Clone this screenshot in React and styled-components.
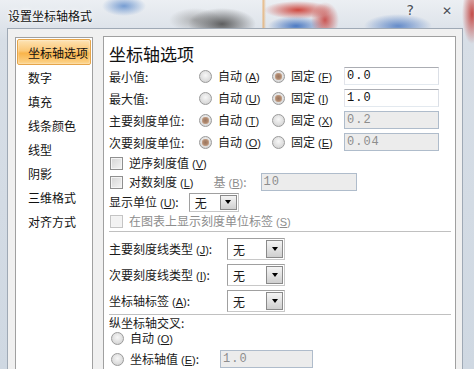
import styled, { createGlobalStyle, css } from "styled-components";

const GlobalStyle = createGlobalStyle`
  html, body {
    margin: 0;
    padding: 0;
    background: #fff;
  }
  body {
    font-family: "Noto Sans CJK SC", "DejaVu Sans", sans-serif;
    font-size: 12px;
    color: #1b1b1b;
  }
`;

// prettier-ignore
const navItems = ["坐标轴选项", "数字", "填充", "线条颜色", "线型", "阴影", "三维格式", "对齐方式"];

// label text with its access key, e.g. 自动(A)
function Label({ text, k, colon }) {
  return (
    <Txt>
      {text}
      <Acc>
        (<u>{k}</u>)
      </Acc>
      {colon && ":"}
    </Txt>
  );
}

function Radio({ checked }) {
  return <RadioDot $checked={checked} />;
}

function Select() {
  return (
    <SelectBox>
      <span>无</span>
      <DropBtn />
    </SelectBox>
  );
}

export default function App() {
  return (
    <>
      <GlobalStyle />
      <Window>
        <TitleBar>
          <Title>设置坐标轴格式</Title>
          <Caption>
            <span>?</span>
            <span className="x">✕</span>
          </Caption>
        </TitleBar>

        <Body>
          <Nav>
            {navItems.map((item, i) => (
              <NavItem key={item} $active={i === 0}>
                {item}
              </NavItem>
            ))}
          </Nav>

          <Panel>
            <Heading>坐标轴选项</Heading>

            <AxisGrid>
              <span>最小值:</span>
              <Choice><Radio /><Label text="自动" k="A" /></Choice>
              <Choice><Radio checked /><Label text="固定" k="F" /></Choice>
              <TextBox $w={95}>0.0</TextBox>

              <span>最大值:</span>
              <Choice><Radio /><Label text="自动" k="U" /></Choice>
              <Choice><Radio checked /><Label text="固定" k="I" /></Choice>
              <TextBox $w={95}>1.0</TextBox>

              <span>主要刻度单位:</span>
              <Choice><Radio checked /><Label text="自动" k="T" /></Choice>
              <Choice><Radio /><Label text="固定" k="X" /></Choice>
              <TextBox $w={95} $disabled>0.2</TextBox>

              <span>次要刻度单位:</span>
              <Choice><Radio checked /><Label text="自动" k="O" /></Choice>
              <Choice><Radio /><Label text="固定" k="E" /></Choice>
              <TextBox $w={95} $disabled>0.04</TextBox>
            </AxisGrid>

            <CheckRow $h={20}>
              <CheckBox />
              <Label text="逆序刻度值" k="V" />
            </CheckRow>
            <CheckRow $h={18}>
              <CheckBox />
              <Label text="对数刻度" k="L" />
              <BaseLabel>
                <Label text="基" k="B" colon />
              </BaseLabel>
              <TextBox $w={96} $disabled>10</TextBox>
            </CheckRow>
            <Row $h={22} $gap={10}>
              <Label text="显示单位" k="U" colon />
              <Select />
            </Row>
            <CheckRow $h={17} $disabled>
              <CheckBox $disabled />
              <Label text="在图表上显示刻度单位标签" k="S" />
            </CheckRow>

            <Separator />

            <TickGrid>
              <Label text="主要刻度线类型" k="J" colon />
              <Select />
              <Label text="次要刻度线类型" k="I" colon />
              <Select />
              <Label text="坐标轴标签" k="A" colon />
              <Select />
            </TickGrid>

            <Separator $top={0} />

            <Row $h={13} $top={1}>纵坐标轴交叉:</Row>
            <Row $h={15} $top={2} $indent={2}>
              <Radio />
              <Label text="自动" k="O" />
            </Row>
            <Row $h={20} $top={3} $indent={2}>
              <Radio />
              <Label text="坐标轴值" k="E" colon />
              <TextBox $w={93} $disabled $ml={15}>1.0</TextBox>
            </Row>
          </Panel>
        </Body>
      </Window>
    </>
  );
}

/********************* styled component *************************/
const Window = styled.div`
  width: 474px;
  height: 369px;
  overflow: hidden;
  display: flex;
  flex-direction: column;
  background:
    radial-gradient(ellipse 22px 10px at 124px 6px, rgba(80, 130, 200, 0.75), transparent),
    radial-gradient(ellipse 34px 16px at 222px 24px, rgba(70, 70, 70, 0.85), transparent),
    radial-gradient(ellipse 26px 12px at 195px 20px, rgba(140, 140, 140, 0.6), transparent),
    radial-gradient(ellipse 34px 9px at 298px 10px, rgba(205, 55, 45, 0.9), transparent),
    radial-gradient(ellipse 14px 18px at 325px 20px, rgba(195, 50, 45, 0.8), transparent),
    radial-gradient(ellipse 28px 10px at 296px 26px, rgba(60, 110, 190, 0.9), transparent),
    radial-gradient(ellipse 34px 12px at 398px 26px, rgba(60, 110, 190, 0.75), transparent),
    radial-gradient(ellipse 10px 30px at 472px 14px, rgba(190, 50, 45, 0.85), transparent),
    linear-gradient(90deg, transparent 262px, rgba(230, 160, 80, 0.7) 263px, transparent 266px),
    linear-gradient(#eceff3, #d7dee6 40px, #cfd8e2);
`;

const TitleBar = styled.div`
  height: 28px;
  flex: none;
  display: flex;
  align-items: center;
  justify-content: space-between;
  padding: 0 22px 0 8px;
`;

const Title = styled.div`
  font-size: 12px;
  color: #111;
  text-shadow: 0 0 6px #fff, 0 0 3px #fff;
  margin-top: 2px;
`;

const Caption = styled.div`
  display: flex;
  gap: 28px;
  align-self: flex-start;
  margin-top: 2px;
  font-family: "DejaVu Sans", sans-serif;
  font-size: 14px;
  color: #4a4f57;
  text-shadow: 0 0 4px #fff;

  .x {
    font-size: 12px;
    margin-top: 2px;
  }
`;

const Body = styled.div`
  flex: 1;
  margin: 0 11px 0 7px;
  background: #f0f0f0;
  border: 1px solid #9fa9b5;
  border-bottom: none;
  display: flex;
  align-items: flex-start;
  padding: 7px 0 0 7px;
  gap: 10px;
`;

const Nav = styled.div`
  width: 76px;
  height: 340px;
  background: #fff;
  border: 1px solid #a0a0a0;
  padding-top: 1px;
  margin-top: 1px;
`;

const NavItem = styled.div`
  height: 24px;
  display: flex;
  align-items: center;
  padding-left: 11px;
  margin: 0 1px;
  white-space: nowrap;
  color: #111;

  ${(props) =>
    props.$active &&
    css`
      background: linear-gradient(#fde3b3, #fbc877 45%, #f9b44a 55%, #fcd48c);
      border: 1px solid #e6a54a;
      border-radius: 2px;
      padding-left: 10px;
      box-shadow: inset 0 0 2px rgba(255, 255, 255, 0.8);
    `}
`;

const Panel = styled.div`
  width: 346px;
  height: 340px;
  background: #fff;
  border: 1px solid #a0a0a0;
  padding: 7px 0 0 5px;
`;

const Heading = styled.div`
  font-size: 17px;
  line-height: 20px;
  color: #111;
  height: 21px;
`;

const AxisGrid = styled.div`
  display: grid;
  grid-template-columns: 90px 73px 72px 95px;
  grid-auto-rows: 22px;
  align-items: center;
  white-space: nowrap;
`;

const Choice = styled.span`
  display: flex;
  align-items: center;
  gap: 6px;
`;

const Txt = styled.span`
  white-space: nowrap;
  line-height: 14px;
`;

const Acc = styled.span`
  margin-left: 3px;
  font-family: "Liberation Sans", "DejaVu Sans", sans-serif;
  font-size: 11px;

  u {
    text-underline-offset: 1px;
  }
`;

const RadioDot = styled.span`
  width: 13px;
  height: 13px;
  flex: none;
  box-sizing: border-box;
  border-radius: 50%;
  border: 1px solid #9a9a9a;
  background: radial-gradient(circle at 50% 40%, #f7f7f7, #d9d9d9 70%, #c8c8c8);

  ${(props) =>
    props.$checked &&
    css`
      background:
        radial-gradient(circle, #9b7660 0, #b08a70 2.5px, #c9ab96 3.5px, transparent 4px),
        radial-gradient(circle at 50% 40%, #f7f7f7, #d9d9d9 70%, #c8c8c8);
    `}
`;

const TextBox = styled.span`
  width: ${(props) => props.$w}px;
  height: 18px;
  box-sizing: border-box;
  display: flex;
  align-items: center;
  padding-left: 2px;
  margin-left: ${(props) => props.$ml || 0}px;
  font-family: "Liberation Mono", "DejaVu Sans Mono", monospace;
  font-size: 12px;
  letter-spacing: 1px;
  background: #fff;
  border: 1px solid #abadb3;
  border-color: #abadb3 #dbdfe6 #e3e9ef #e2e3ea;
  color: #111;

  ${(props) =>
    props.$disabled &&
    css`
      background: #ececec;
      border: 1px solid #afbccb;
      color: #8d8d8d;
    `}
`;

const Row = styled.div`
  height: ${(props) => props.$h}px;
  line-height: 13px;
  margin-top: ${(props) => props.$top || 0}px;
  padding-left: ${(props) => props.$indent || 0}px;
  display: flex;
  align-items: center;
  gap: ${(props) => props.$gap || 6}px;
  white-space: nowrap;
`;

const CheckRow = styled(Row)`
  padding-left: 1px;
  gap: 6px;
  color: ${(props) => (props.$disabled ? "#8d8d8d" : "#1b1b1b")};
`;

const CheckBox = styled.span`
  width: 13px;
  height: 13px;
  flex: none;
  box-sizing: border-box;
  border: 1px solid #8f8f8f;
  background: linear-gradient(135deg, #d4d4d4, #f4f4f4);
  box-shadow: inset 0 0 0 1px #f4f4f4;

  ${(props) =>
    props.$disabled &&
    css`
      border-color: #c4c4c4;
      background: #f2f2f2;
    `}
`;

const BaseLabel = styled.span`
  margin: 0 8px 0 14px;
  color: #8d8d8d;
`;

const SelectBox = styled.span`
  width: 50px;
  height: 19px;
  box-sizing: border-box;
  display: flex;
  align-items: center;
  justify-content: space-between;
  padding: 1px 1px 1px 5px;
  background: #fff;
  border: 1px solid #8c8c8c;
  border-color: #a0a0a0 #c8c8c8 #c8c8c8 #a0a0a0;
`;

const DropBtn = styled.span`
  width: 17px;
  height: 100%;
  box-sizing: border-box;
  border: 1px solid #8a8a8a;
  background: linear-gradient(#f4f4f4, #e2e2e2 50%, #cfcfcf);
  display: flex;
  align-items: center;
  justify-content: center;

  &::after {
    content: "";
    border-left: 3.5px solid transparent;
    border-right: 3.5px solid transparent;
    border-top: 4px solid #000;
  }
`;

const TickGrid = styled.div`
  display: grid;
  grid-template-columns: 118px 58px;
  grid-auto-rows: 26px;
  align-items: center;
  padding-top: 4px;
  white-space: nowrap;

  ${SelectBox} {
    width: 58px;
    height: 22px;
  }
`;

const Separator = styled.div`
  height: 0;
  border-top: 1px solid #c0c0c0;
  margin: ${(props) => (props.$top ?? 1)}px 4px 0 0;
`;
